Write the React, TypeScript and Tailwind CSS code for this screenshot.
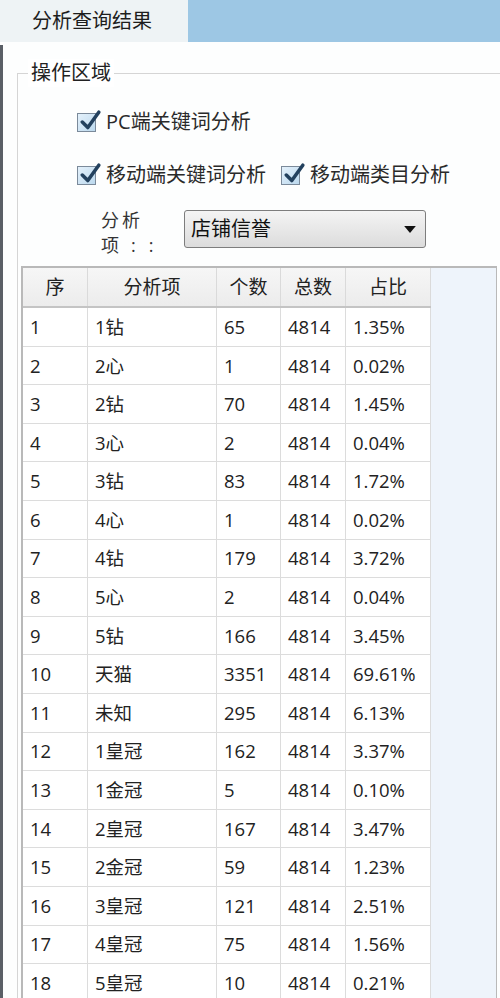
const rows: [string, string, string, string, string][] = [
  ["1", "1钻", "65", "4814", "1.35%"],
  ["2", "2心", "1", "4814", "0.02%"],
  ["3", "2钻", "70", "4814", "1.45%"],
  ["4", "3心", "2", "4814", "0.04%"],
  ["5", "3钻", "83", "4814", "1.72%"],
  ["6", "4心", "1", "4814", "0.02%"],
  ["7", "4钻", "179", "4814", "3.72%"],
  ["8", "5心", "2", "4814", "0.04%"],
  ["9", "5钻", "166", "4814", "3.45%"],
  ["10", "天猫", "3351", "4814", "69.61%"],
  ["11", "未知", "295", "4814", "6.13%"],
  ["12", "1皇冠", "162", "4814", "3.37%"],
  ["13", "1金冠", "5", "4814", "0.10%"],
  ["14", "2皇冠", "167", "4814", "3.47%"],
  ["15", "2金冠", "59", "4814", "1.23%"],
  ["16", "3皇冠", "121", "4814", "2.51%"],
  ["17", "4皇冠", "75", "4814", "1.56%"],
  ["18", "5皇冠", "10", "4814", "0.21%"],
];

const cols = ["w-[65px]", "w-[129px]", "w-[64px]", "w-[65px]", "w-[85px]"];
const heads = ["序", "分析项", "个数", "总数", "占比"];

function Check({ label }: { label: string }) {
  return (
    <label className="flex h-[26px] items-center gap-[10px]">
      <span className="relative flex h-[19px] w-[19px] items-center justify-center border border-[#7b8a9a] bg-gradient-to-br from-[#e4f1fb] to-[#bcd9ee]">
        <svg viewBox="0 0 20 20" className="absolute -top-[4px] left-[1px] h-[22px] w-[22px]" aria-hidden>
          <path d="M3 11 L8 16 L18 2" fill="none" stroke="#23415e" strokeWidth={3.2} strokeLinecap="round" strokeLinejoin="round" />
        </svg>
      </span>
      <span className="text-[20px] leading-[26px] text-[#2a2a2a]">{label}</span>
    </label>
  );
}

export default function App() {
  return (
    <div
      className="relative h-[998px] w-[500px] overflow-hidden bg-white text-[#222]"
      style={{ fontFamily: '"Open Sans", "Noto Sans CJK SC", sans-serif' }}
    >
      {/* tab bar */}
      <div className="flex h-[42px] bg-[#9dc7e4]">
        <div className="flex w-[188px] items-center bg-[#eef3f5] pl-[32px] text-[20px] text-[#1d1d1d]">分析查询结果</div>
      </div>

      <div className="flex h-[956px]">
        <div className="mt-[3px] w-[3px] bg-[#5a5f66]" />
        <div className="flex-1 bg-[#fdfefe] pl-[14px] pt-[31px]">
          {/* group box */}
          <div className="relative h-full border-l border-t border-[#d5d5d5]">
            <div className="absolute -top-[15px] left-[10px] bg-white px-[3px] text-[20px] leading-[28px] text-[#222]">操作区域</div>

            <div className="pl-[59px] pt-[35px]">
              <Check label="PC端关键词分析" />
            </div>
            <div className="flex gap-[15px] pl-[59px] pt-[27px]">
              <Check label="移动端关键词分析" />
              <Check label="移动端类目分析" />
            </div>

            <div className="flex items-start pl-[83px] pt-[20px]">
              <div className="w-[83px] text-[18px] leading-[25px] text-[#333]">
                <div className="tracking-[3px]">分析</div>
                <div className="flex">
                  <span>项</span>
                  <span className="ml-[12px]">:</span>
                  <span className="ml-[13px]">:</span>
                </div>
              </div>
              <div className="mt-[2px] flex h-[38px] w-[242px] items-center justify-between rounded-[3px] border border-[#7d7d7d] bg-gradient-to-b from-[#f4f4f4] to-[#dcdcdc] pl-[6px] pr-[9px]">
                <span className="text-[20px] text-[#111]">店铺信誉</span>
                <svg viewBox="0 0 10 6" className="h-[7px] w-[12px]" aria-hidden>
                  <path d="M0 0 H10 L5 6 Z" fill="#111" />
                </svg>
              </div>
            </div>

            {/* grid */}
            <div className="ml-[3px] mr-[3px] mt-[8px] flex h-[740px] border-l-2 border-t-2 border-r border-[#b9b9b9] bg-[#eef4fb]">
              <div className="bg-white">
                <div className="flex h-[40px] border-b-2 border-[#c4c4c4] bg-gradient-to-b from-[#f6f6f6] to-[#ececec]">
                  {heads.map((h, i) => (
                    <div key={h} className={`${cols[i]} flex items-center justify-center border-r border-[#dadada] text-[19px] text-[#222]`}>
                      {h}
                    </div>
                  ))}
                </div>
                {rows.map((r) => (
                  <div key={r[0]} className="flex h-[38.6px] border-b border-[#dcdcdc]">
                    {r.map((c, i) => (
                      <div key={i} className={`${cols[i]} flex items-center border-r border-[#dcdcdc] pl-[7px] text-[18.5px] text-[#222]`}>
                        {c}
                      </div>
                    ))}
                  </div>
                ))}
              </div>
            </div>
          </div>
        </div>
      </div>
    </div>
  );
}
